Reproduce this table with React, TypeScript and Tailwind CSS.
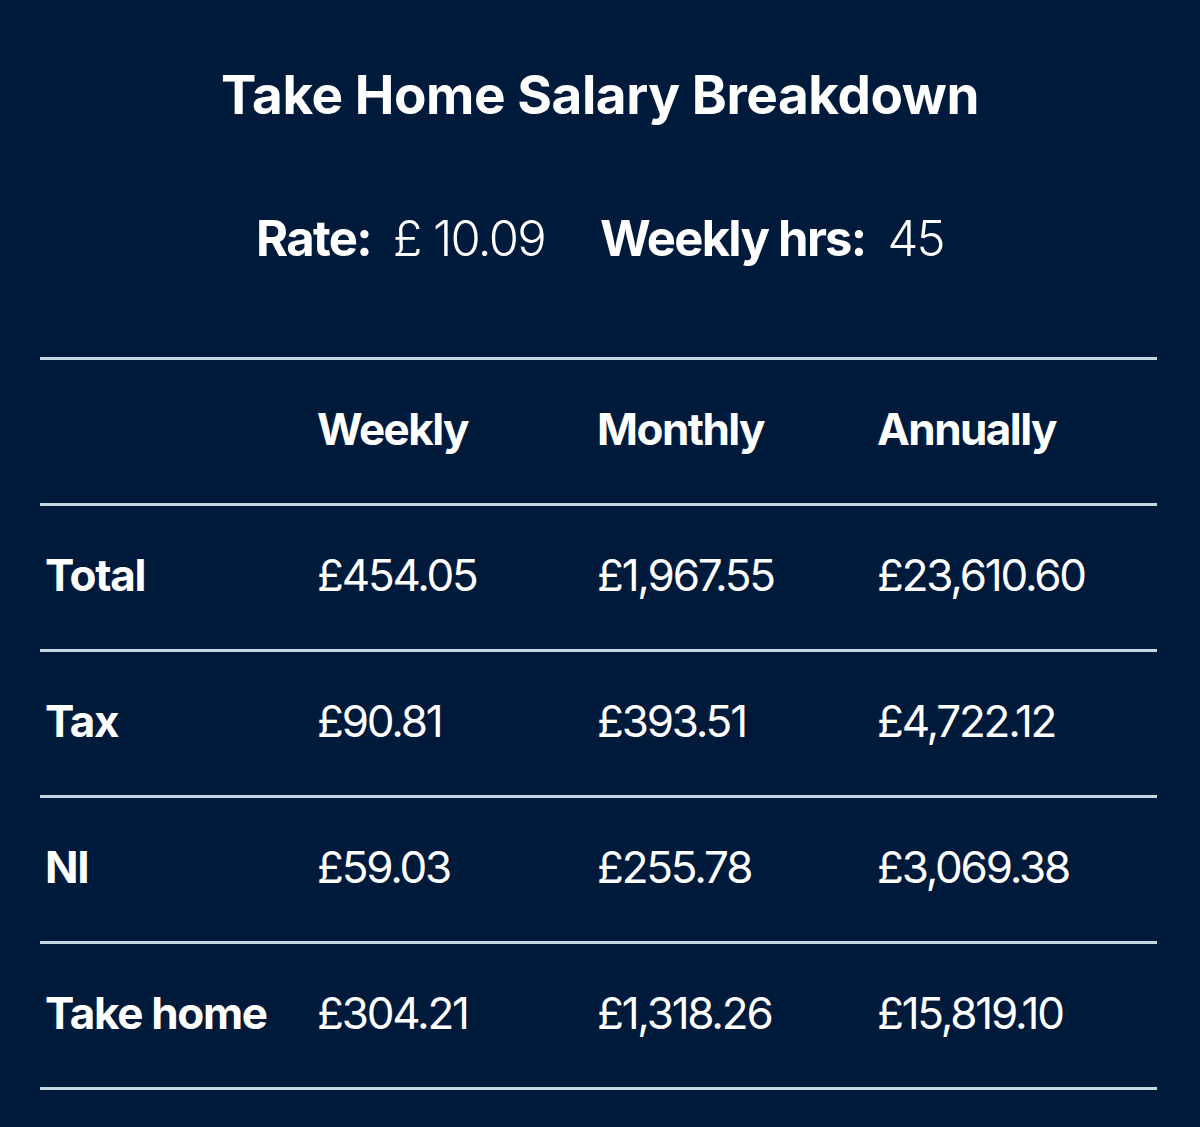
import React from 'react';

type Row = { label: string; weekly: string; monthly: string; annually: string };

const rows: Row[] = [
  { label: 'Total', weekly: '£454.05', monthly: '£1,967.55', annually: '£23,610.60' },
  { label: 'Tax', weekly: '£90.81', monthly: '£393.51', annually: '£4,722.12' },
  { label: 'NI', weekly: '£59.03', monthly: '£255.78', annually: '£3,069.38' },
  { label: 'Take home', weekly: '£304.21', monthly: '£1,318.26', annually: '£15,819.10' },
];

const font = { fontFamily: 'Inter, "Liberation Sans", sans-serif' };

export default function App() {
  return (
    <div className="min-h-[1127px] w-full bg-[#001a3b] text-white" style={font}>
      {/* Heading */}
      <div className="flex h-[190px] items-center justify-center">
        <h1 className="text-[53px] font-bold leading-none tracking-[-0.008em]">Take Home Salary Breakdown</h1>
      </div>

      {/* Rate + hours */}
      <div className="flex h-[96px] items-center justify-center gap-[55px] text-[49px] leading-none tracking-[-0.035em]">
        <div className="flex items-baseline gap-[22px]">
          <span className="font-bold">Rate:</span>
          <span className="font-light">£ 10.09</span>
        </div>
        <div className="flex items-baseline gap-[22px]">
          <span className="font-bold">Weekly hrs:</span>
          <span className="font-light">45</span>
        </div>
      </div>

      {/* Table */}
      <div className="ml-[40px] mr-[43px] mt-[71px] border-t-[3px] border-[#c6d7e4] text-[44px] leading-none">
        <div className="grid h-[146px] grid-cols-[272px_280px_280px_1fr] items-center border-b-[3px] border-[#c6d7e4] pb-[5px] font-bold tracking-[-0.035em]">
          <div />
          <div className="pl-[5px]">Weekly</div>
          <div className="pl-[5px]">Monthly</div>
          <div className="pl-[5px]">Annually</div>
        </div>
        {rows.map((r) => (
          <div
            key={r.label}
            className="grid h-[146px] grid-cols-[272px_280px_280px_1fr] items-center border-b-[3px] border-[#c6d7e4] pb-[5px]"
          >
            <div className="pl-[5px] font-bold tracking-[-0.03em]">{r.label}</div>
            <div className="pl-[5px] font-normal tracking-[-0.05em]">{r.weekly}</div>
            <div className="pl-[5px] font-normal tracking-[-0.05em]">{r.monthly}</div>
            <div className="pl-[5px] font-normal tracking-[-0.05em]">{r.annually}</div>
          </div>
        ))}
      </div>
    </div>
  );
}
